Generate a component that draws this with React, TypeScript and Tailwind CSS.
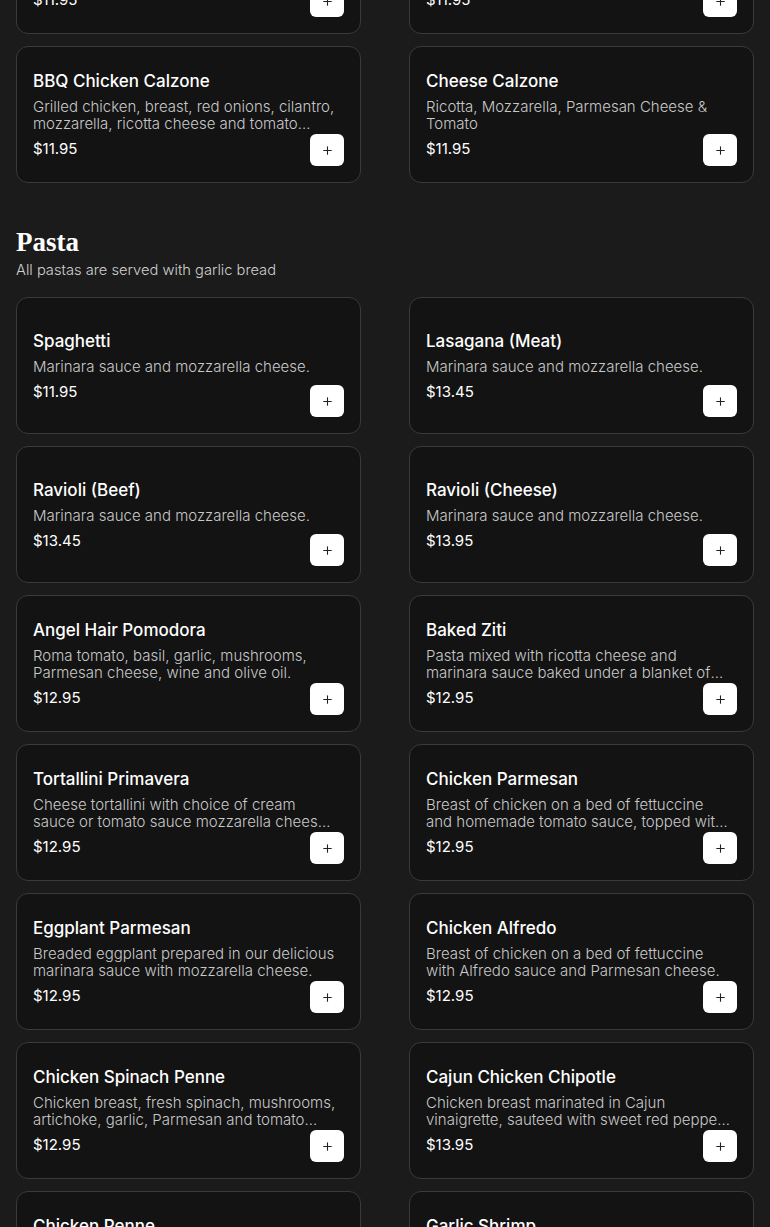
import { Plus } from 'lucide-react';

type Item = { name: string; desc: string; price: string };

const calzones: Item[] = [
    { name: 'Chicken Calzone', desc: 'Grilled chicken, mozzarella, ricotta cheese and tomato sauce.', price: '$11.95' },
    { name: 'Veggie Calzone', desc: 'Spinach, mushrooms, onions, mozzarella and ricotta cheese.', price: '$11.95' },
    { name: 'BBQ Chicken Calzone', desc: 'Grilled chicken, breast, red onions, cilantro, mozzarella, ricotta cheese and tomato sauce.', price: '$11.95' },
    { name: 'Cheese Calzone', desc: 'Ricotta, Mozzarella, Parmesan Cheese & Tomato', price: '$11.95' },
];

const pastas: Item[] = [
    { name: 'Spaghetti', desc: 'Marinara sauce and mozzarella cheese.', price: '$11.95' },
    { name: 'Lasagana (Meat)', desc: 'Marinara sauce and mozzarella cheese.', price: '$13.45' },
    { name: 'Ravioli (Beef)', desc: 'Marinara sauce and mozzarella cheese.', price: '$13.45' },
    { name: 'Ravioli (Cheese)', desc: 'Marinara sauce and mozzarella cheese.', price: '$13.95' },
    { name: 'Angel Hair Pomodora', desc: 'Roma tomato, basil, garlic, mushrooms, Parmesan cheese, wine and olive oil.', price: '$12.95' },
    { name: 'Baked Ziti', desc: 'Pasta mixed with ricotta cheese and marinara sauce baked under a blanket of mozzarella cheese.', price: '$12.95' },
    { name: 'Tortallini Primavera', desc: 'Cheese tortallini with choice of cream sauce or tomato sauce mozzarella cheese and vegetables.', price: '$12.95' },
    { name: 'Chicken Parmesan', desc: 'Breast of chicken on a bed of fettuccine and homemade tomato sauce, topped with mozzarella.', price: '$12.95' },
    { name: 'Eggplant Parmesan', desc: 'Breaded eggplant prepared in our delicious marinara sauce with mozzarella cheese.', price: '$12.95' },
    { name: 'Chicken Alfredo', desc: 'Breast of chicken on a bed of fettuccine with Alfredo sauce and Parmesan cheese.', price: '$12.95' },
    { name: 'Chicken Spinach Penne', desc: 'Chicken breast, fresh spinach, mushrooms, artichoke, garlic, Parmesan and tomato sauce.', price: '$12.95' },
    { name: 'Cajun Chicken Chipotle', desc: 'Chicken breast marinated in Cajun vinaigrette, sauteed with sweet red peppers and chipotle cream.', price: '$13.95' },
    { name: 'Chicken Penne', desc: 'Penne pasta with grilled chicken breast, garlic and cream sauce topped with Parmesan.', price: '$12.95' },
    { name: 'Garlic Shrimp', desc: 'Shrimp sauteed in garlic butter and white wine over linguine pasta with Parmesan.', price: '$14.95' },
];

const MenuCard = ({ item }: { item: Item }) => (
    <div className="relative h-[137px] flex items-center px-[16px] rounded-xl border border-[#3a3a3a] bg-[#131313]">
        <div className="w-full">
            <h3 className="text-[17px] leading-[22px] font-medium text-white">{item.name}</h3>
            <p className="mt-[6px] pr-[6px] text-[15px] leading-[17px] font-light text-[#c8c8c8] line-clamp-2">{item.desc}</p>
            <div className="mt-[7px] text-[15px] leading-[20px] font-normal text-white">{item.price}</div>
        </div>
        <button className="absolute right-[16px] bottom-[16px] w-[34px] h-[32px] rounded-md bg-white flex items-center justify-center text-[#222]">
            <Plus size={13} strokeWidth={2} />
        </button>
    </div>
);

const App = () => {
    return (
        <div className="min-h-screen bg-[#1b1b1b] overflow-hidden" style={{ fontFamily: 'Inter, "Open Sans", sans-serif' }}>
            <div className="px-[16px] -mt-[103px] pb-10">
                <div className="grid grid-cols-2 gap-x-[48px] gap-y-[12px]">
                    {calzones.map(item => <MenuCard key={item.name} item={item} />)}
                </div>

                <div className="mt-[44px] mb-[18px]">
                    <h2 className="text-[27px] leading-[30px] font-bold text-white" style={{ fontFamily: '"Liberation Serif", serif' }}>Pasta</h2>
                    <p className="mt-[4px] text-[14.7px] leading-[18px] font-light text-[#cfcfcf]">All pastas are served with garlic bread</p>
                </div>

                <div className="grid grid-cols-2 gap-x-[48px] gap-y-[12px]">
                    {pastas.map(item => <MenuCard key={item.name} item={item} />)}
                </div>
            </div>
        </div>
    );
};

export default App;
